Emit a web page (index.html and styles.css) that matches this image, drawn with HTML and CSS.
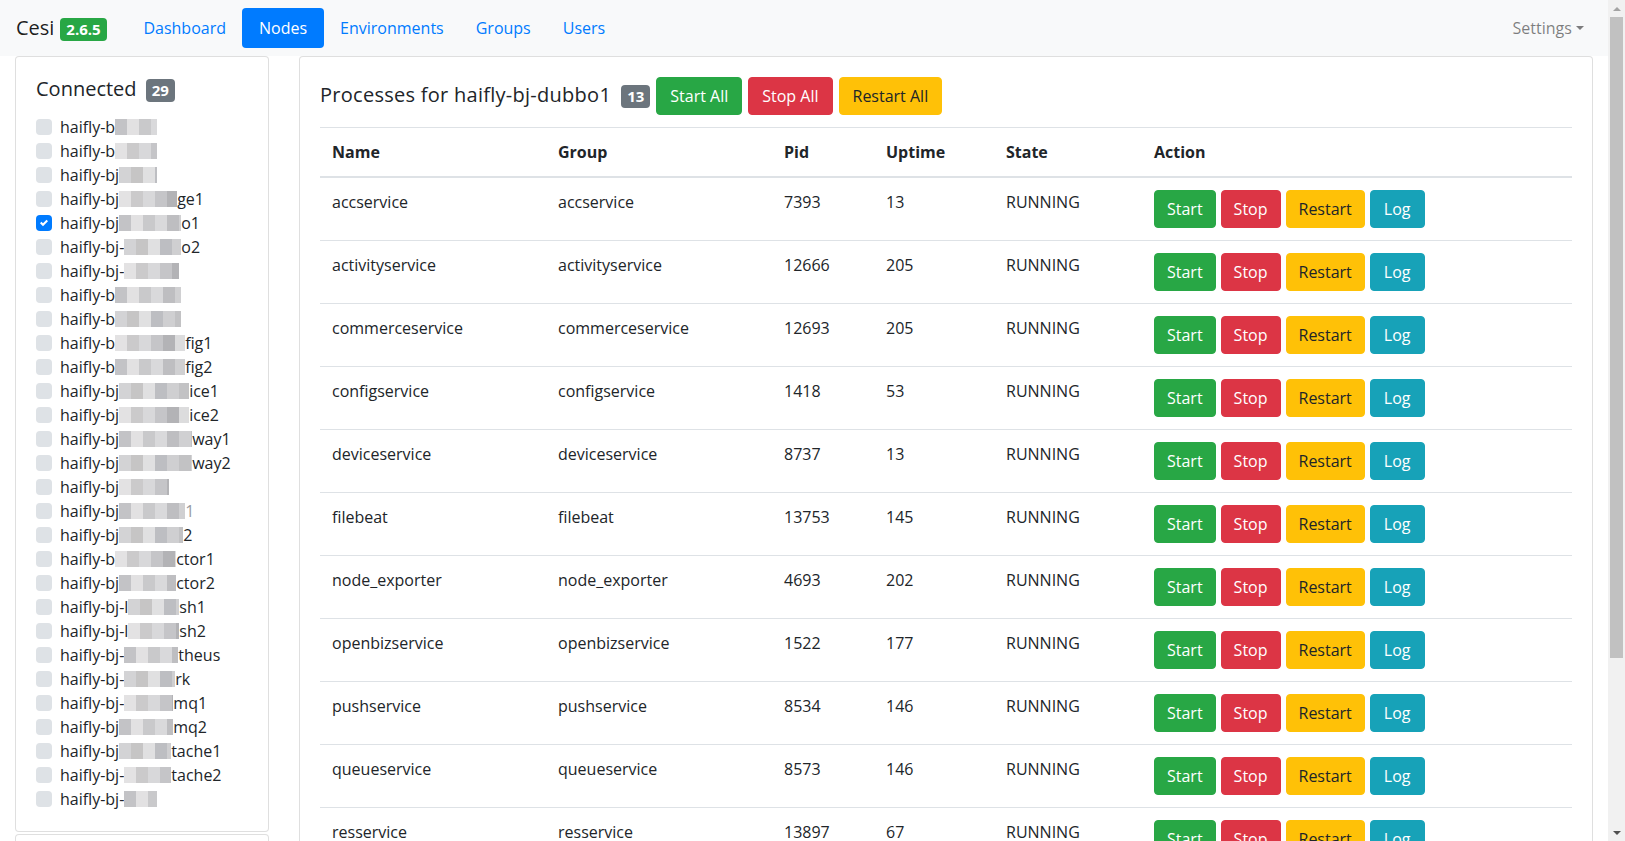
FILE: index.html
```html
<!DOCTYPE html>
<html lang="en">
<head>
<meta charset="utf-8">
<title>Cesi - Nodes</title>
<link rel="stylesheet" href="styles.css">
</head>
<body>
<div class="viewport">
  <div class="page">
    <nav class="navbar">
      <a class="brand">Cesi <span class="badge badge-success">2.6.5</span></a>
      <a class="nav-link">Dashboard</a>
      <a class="nav-link active">Nodes</a>
      <a class="nav-link">Environments</a>
      <a class="nav-link">Groups</a>
      <a class="nav-link">Users</a>
      <a class="nav-link settings">Settings<span class="caret"></span></a>
    </nav>
    <div class="main">
      <aside class="side">
        <div class="card">
          <div class="card-body">
            <h5 class="side-title">Connected <span class="badge badge-secondary">29</span></h5>
            <ul class="nodes">
              <li><span class="box"></span><span class="nm">haifly-b<span class="mz w42"></span></span></li>
              <li><span class="box"></span><span class="nm">haifly-b<span class="mz w42 p2"></span></span></li>
              <li><span class="box"></span><span class="nm">haifly-bj<span class="mz w38 p3"></span></span></li>
              <li><span class="box"></span><span class="nm">haifly-bj<span class="mz w58 p2"></span>ge1</span></li>
              <li><span class="box checked"><svg width="8" height="8" viewBox="0 0 8 8"><path fill="#fff" d="M6.564.75l-3.59 3.612-1.538-1.55L0 4.26 2.974 7.25 8 2.193z"/></svg></span><span class="nm">haifly-bj<span class="mz w62"></span>o1</span></li>
              <li><span class="box"></span><span class="nm">haifly-bj-<span class="mz w57 p3"></span>o2</span></li>
              <li><span class="box"></span><span class="nm">haifly-bj-<span class="mz w55 p2"></span></span></li>
              <li><span class="box"></span><span class="nm">haifly-b<span class="mz w66"></span></span></li>
              <li><span class="box"></span><span class="nm">haifly-b<span class="mz w66 p3"></span></span></li>
              <li><span class="box"></span><span class="nm">haifly-b<span class="mz w70 p2"></span>fig1</span></li>
              <li><span class="box"></span><span class="nm">haifly-b<span class="mz w70"></span>fig2</span></li>
              <li><span class="box"></span><span class="nm">haifly-bj<span class="mz w70 p3"></span>ice1</span></li>
              <li><span class="box"></span><span class="nm">haifly-bj<span class="mz w70 p2"></span>ice2</span></li>
              <li><span class="box"></span><span class="nm">haifly-bj<span class="mz w73"></span>way1</span></li>
              <li><span class="box"></span><span class="nm">haifly-bj<span class="mz w73 p3"></span>way2</span></li>
              <li><span class="box"></span><span class="nm">haifly-bj<span class="mz w50 p2"></span></span></li>
              <li><span class="box"></span><span class="nm">haifly-bj<span class="mz w66"></span><span class="faint">1</span></span></li>
              <li><span class="box"></span><span class="nm">haifly-bj<span class="mz w64 p3"></span>2</span></li>
              <li><span class="box"></span><span class="nm">haifly-b<span class="mz w61 p2"></span>ctor1</span></li>
              <li><span class="box"></span><span class="nm">haifly-bj<span class="mz w57"></span>ctor2</span></li>
              <li><span class="box"></span><span class="nm">haifly-bj-l<span class="mz w51 p3"></span>sh1</span></li>
              <li><span class="box"></span><span class="nm">haifly-bj-l<span class="mz w51 p2"></span>sh2</span></li>
              <li><span class="box"></span><span class="nm">haifly-bj-<span class="mz w54"></span>theus</span></li>
              <li><span class="box"></span><span class="nm">haifly-bj-<span class="mz w51 p3"></span>rk</span></li>
              <li><span class="box"></span><span class="nm">haifly-bj-<span class="mz w49 p2"></span>mq1</span></li>
              <li><span class="box"></span><span class="nm">haifly-bj<span class="mz w54"></span>mq2</span></li>
              <li><span class="box"></span><span class="nm">haifly-bj<span class="mz w52 p3"></span>tache1</span></li>
              <li><span class="box"></span><span class="nm">haifly-bj-<span class="mz w47 p2"></span>tache2</span></li>
              <li><span class="box"></span><span class="nm">haifly-bj-<span class="mz w33"></span></span></li>
            </ul>
          </div>
        </div>
        <div class="card card-extra"></div>
      </aside>
      <section class="card procs">
        <div class="card-body">
          <div class="procs-head">
            <h5 class="procs-title">Processes for haifly-bj-dubbo1</h5>
            <span class="badge badge-secondary head-badge">13</span>
            <button class="btn btn-success">Start All</button>
            <button class="btn btn-danger">Stop All</button>
            <button class="btn btn-warning">Restart All</button>
          </div>
          <table class="table">
            <colgroup>
              <col class="c-name"><col class="c-group"><col class="c-pid"><col class="c-up"><col class="c-state"><col class="c-act">
            </colgroup>
            <thead>
              <tr><th>Name</th><th>Group</th><th>Pid</th><th>Uptime</th><th>State</th><th>Action</th></tr>
            </thead>
            <tbody>
              <tr><td>accservice</td><td>accservice</td><td>7393</td><td>13</td><td>RUNNING</td><td><div class="actions"><button class="btn btn-success">Start</button><button class="btn btn-danger">Stop</button><button class="btn btn-warning">Restart</button><button class="btn btn-info">Log</button></div></td></tr>
              <tr><td>activityservice</td><td>activityservice</td><td>12666</td><td>205</td><td>RUNNING</td><td><div class="actions"><button class="btn btn-success">Start</button><button class="btn btn-danger">Stop</button><button class="btn btn-warning">Restart</button><button class="btn btn-info">Log</button></div></td></tr>
              <tr><td>commerceservice</td><td>commerceservice</td><td>12693</td><td>205</td><td>RUNNING</td><td><div class="actions"><button class="btn btn-success">Start</button><button class="btn btn-danger">Stop</button><button class="btn btn-warning">Restart</button><button class="btn btn-info">Log</button></div></td></tr>
              <tr><td>configservice</td><td>configservice</td><td>1418</td><td>53</td><td>RUNNING</td><td><div class="actions"><button class="btn btn-success">Start</button><button class="btn btn-danger">Stop</button><button class="btn btn-warning">Restart</button><button class="btn btn-info">Log</button></div></td></tr>
              <tr><td>deviceservice</td><td>deviceservice</td><td>8737</td><td>13</td><td>RUNNING</td><td><div class="actions"><button class="btn btn-success">Start</button><button class="btn btn-danger">Stop</button><button class="btn btn-warning">Restart</button><button class="btn btn-info">Log</button></div></td></tr>
              <tr><td>filebeat</td><td>filebeat</td><td>13753</td><td>145</td><td>RUNNING</td><td><div class="actions"><button class="btn btn-success">Start</button><button class="btn btn-danger">Stop</button><button class="btn btn-warning">Restart</button><button class="btn btn-info">Log</button></div></td></tr>
              <tr><td>node_exporter</td><td>node_exporter</td><td>4693</td><td>202</td><td>RUNNING</td><td><div class="actions"><button class="btn btn-success">Start</button><button class="btn btn-danger">Stop</button><button class="btn btn-warning">Restart</button><button class="btn btn-info">Log</button></div></td></tr>
              <tr><td>openbizservice</td><td>openbizservice</td><td>1522</td><td>177</td><td>RUNNING</td><td><div class="actions"><button class="btn btn-success">Start</button><button class="btn btn-danger">Stop</button><button class="btn btn-warning">Restart</button><button class="btn btn-info">Log</button></div></td></tr>
              <tr><td>pushservice</td><td>pushservice</td><td>8534</td><td>146</td><td>RUNNING</td><td><div class="actions"><button class="btn btn-success">Start</button><button class="btn btn-danger">Stop</button><button class="btn btn-warning">Restart</button><button class="btn btn-info">Log</button></div></td></tr>
              <tr><td>queueservice</td><td>queueservice</td><td>8573</td><td>146</td><td>RUNNING</td><td><div class="actions"><button class="btn btn-success">Start</button><button class="btn btn-danger">Stop</button><button class="btn btn-warning">Restart</button><button class="btn btn-info">Log</button></div></td></tr>
              <tr><td>resservice</td><td>resservice</td><td>13897</td><td>67</td><td>RUNNING</td><td><div class="actions"><button class="btn btn-success">Start</button><button class="btn btn-danger">Stop</button><button class="btn btn-warning">Restart</button><button class="btn btn-info">Log</button></div></td></tr>
            </tbody>
          </table>
        </div>
      </section>
    </div>
  </div>
  <div class="scrollbar">
    <div class="sb-btn sb-up"><span class="tri-up"></span></div>
    <div class="sb-thumb"></div>
    <div class="sb-track"></div>
    <div class="sb-btn sb-down"><span class="tri-down"></span></div>
  </div>
</div>
</body>
</html>
```

FILE: styles.css
```css
* { box-sizing: border-box; }
html, body {
  margin: 0;
  height: 100%;
  overflow: hidden;
}
body {
  font-family: "Open Sans", "Noto Sans", sans-serif;
  font-size: 16px;
  line-height: 1.5;
  color: #212529;
  background: #fff;
}
.viewport {
  display: flex;
  height: 100vh;
}
.page {
  flex: 1;
  min-width: 0;
  overflow: hidden;
}

/* navbar */
.navbar {
  display: flex;
  align-items: center;
  height: 56px;
  padding: 8px 16px;
  background: #f8f9fa;
}
.brand {
  font-size: 20px;
  line-height: 30px;
  padding: 5px 0;
  margin-right: 20px;
  color: rgba(0,0,0,.9);
  white-space: nowrap;
}
.badge {
  display: inline-block;
  padding: .25em .4em;
  font-size: 75%;
  font-weight: 700;
  line-height: 1;
  text-align: center;
  white-space: nowrap;
  vertical-align: baseline;
  border-radius: 4px;
  color: #fff;
}
.brand .badge { padding: .25em .45em; }
.badge-success { background: #28a745; }
.badge-secondary { background: #6c757d; }
.nav-link {
  display: block;
  padding: 8px 16px;
  line-height: 24px;
  color: #007bff;
  border-radius: 4px;
  white-space: nowrap;
}
.nav-link.active {
  background: #007bff;
  color: #fff;
  padding: 8px 17px;
}
.nav-link.settings {
  margin-left: auto;
  padding: 8px;
  color: rgba(0,0,0,.5);
}
.caret {
  display: inline-block;
  margin-left: .255em;
  vertical-align: .255em;
  border-top: .3em solid;
  border-right: .3em solid transparent;
  border-left: .3em solid transparent;
}

/* layout */
.main {
  display: flex;
  align-items: flex-start;
  gap: 30px;
  padding: 0 15px;
}
.side {
  flex: none;
  width: 254px;
}
.card {
  background: #fff;
  border: 1px solid rgba(0,0,0,.125);
  border-radius: 4px;
}
.card-body { padding: 20px; }
.card-extra {
  margin-top: 2px;
  height: 120px;
}
.procs {
  flex: 1;
  min-width: 0;
}

/* nodes list */
.side-title {
  margin: 0 0 14px;
  font-size: 20px;
  line-height: 24px;
  font-weight: 400;
  height: 24px;
}
.side-title .badge { margin-left: 4px; }
.nodes {
  list-style: none;
  margin: 0;
  padding: 0;
}
.nodes li {
  display: flex;
  align-items: flex-start;
  height: 24px;
  line-height: 24px;
  white-space: nowrap;
}
.box {
  flex: none;
  width: 16px;
  height: 16px;
  margin: 4px 8px 0 0;
  border-radius: 4px;
  background: #dee2e6;
  display: flex;
  align-items: center;
  justify-content: center;
}
.box.checked { background: #007bff; }
.box svg { display: block; }
.mz {
  display: inline-block;
  vertical-align: top;
  height: 16px;
  margin-top: 4px;
  background: repeating-linear-gradient(90deg,
    #c3c3c6 0 12px, #e2e1e2 12px 24px, #c9c9cb 24px 36px, #d9d9db 36px 48px, #bebec1 48px 60px, #d0d0d2 60px 72px);
}
.mz.p2 {
  background: repeating-linear-gradient(90deg,
    #e3e2e3 0 12px, #cbcacb 12px 24px, #d8d8da 24px 36px, #c5c5c8 36px 48px, #b3b3b6 48px 60px, #dcdcdd 60px 72px);
}
.mz.p3 {
  background: repeating-linear-gradient(90deg,
    #d3d3d5 0 12px, #c6c5c5 12px 24px, #e0e0e1 24px 36px, #bdbec2 36px 48px, #cfcfd1 48px 60px, #c2c2c4 60px 72px);
}
.faint { color: #9a9aa0; }
.w33 { width: 33px; } .w38 { width: 38px; } .w42 { width: 42px; } .w47 { width: 47px; }
.w49 { width: 49px; } .w50 { width: 50px; } .w51 { width: 51px; } .w52 { width: 52px; }
.w54 { width: 54px; } .w55 { width: 55px; } .w57 { width: 57px; } .w58 { width: 58px; }
.w61 { width: 61px; } .w62 { width: 62px; } .w64 { width: 64px; } .w66 { width: 66px; }
.w70 { width: 70px; } .w73 { width: 73px; }

/* processes */
.procs-head {
  display: flex;
  align-items: baseline;
  margin-bottom: 12px;
}
.procs-title {
  margin: 0;
  font-size: 20px;
  line-height: 24px;
  font-weight: 400;
  letter-spacing: .27px;
  white-space: nowrap;
}
.head-badge {
  margin-left: 10px;
  font-size: 15px;
}
.procs-head .btn {
  margin-left: 6px;
  padding: 6px 13px;
}
.btn {
  display: inline-block;
  font-family: inherit;
  font-size: 16px;
  line-height: 24px;
  padding: 6px 12px;
  border: 1px solid transparent;
  border-radius: 4px;
  color: #fff;
  cursor: pointer;
  white-space: nowrap;
}
.btn-success { background: #28a745; border-color: #28a745; }
.btn-danger { background: #dc3545; border-color: #dc3545; }
.btn-warning { background: #ffc107; border-color: #ffc107; color: #212529; }
.btn-info { background: #17a2b8; border-color: #17a2b8; padding: 6px 13px; }

.table {
  width: 100%;
  border-collapse: collapse;
  table-layout: fixed;
  color: #212529;
}
.c-name { width: 226px; }
.c-group { width: 226px; }
.c-pid { width: 102px; }
.c-up { width: 120px; }
.c-state { width: 148px; }
.table th, .table td {
  padding: 12px;
  border-top: 1px solid #dee2e6;
  text-align: left;
  vertical-align: top;
  white-space: nowrap;
}
.table thead th {
  vertical-align: bottom;
  border-bottom: 2px solid #dee2e6;
  font-weight: 700;
}
.actions {
  display: flex;
  gap: 5px;
}

/* scrollbar */
.scrollbar {
  flex: none;
  width: 17px;
  display: flex;
  flex-direction: column;
  background: #f1f1f1;
}
.sb-btn {
  flex: none;
  height: 17px;
  display: flex;
  align-items: center;
  justify-content: center;
}
.tri-up {
  border-left: 4px solid transparent;
  border-right: 4px solid transparent;
  border-bottom: 4px solid #a3a3a3;
}
.tri-down {
  border-left: 4px solid transparent;
  border-right: 4px solid transparent;
  border-top: 4px solid #505050;
}
.sb-thumb {
  flex: none;
  height: 641px;
  margin: 0 2px;
  background: #c1c1c1;
}
.sb-track { flex: 1; }
```
